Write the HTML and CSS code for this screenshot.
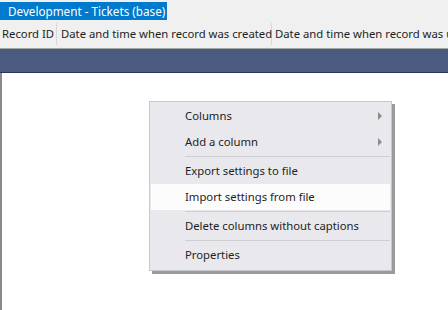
FILE: index.html
```html
<!DOCTYPE html>
<html lang="en">
<head>
    <meta charset="UTF-8">
    <title>Development - Tickets (base)</title>
    <link rel="stylesheet" href="styles.css">
</head>
<body>
    <div class="tab-strip">
        <div class="tab">Development - Tickets (base)</div>
    </div>
    <div class="grid-header">
        <div class="col col-id">Record ID</div>
        <div class="col col-created">Date and time when record was created</div>
        <div class="col col-updated">Date and time when record was updated</div>
    </div>
    <div class="group-bar"></div>
    <div class="grid-body"></div>

    <div class="context-menu">
        <div class="menu-item has-sub">Columns</div>
        <div class="menu-item has-sub">Add a column</div>
        <div class="menu-sep"></div>
        <div class="menu-item">Export settings to file</div>
        <div class="menu-item hover">Import settings from file</div>
        <div class="menu-sep"></div>
        <div class="menu-item">Delete columns without captions</div>
        <div class="menu-sep"></div>
        <div class="menu-item">Properties</div>
    </div>
</body>
</html>
```

FILE: styles.css
```css
body {
    margin: 0;
    padding: 0;
    width: 448px;
    height: 310px;
    overflow: hidden;
    position: relative;
    background-color: #fff;
    font-family: "Noto Sans", "Open Sans", Arial, sans-serif;
    font-size: 11.3px;
    color: #1e1e1e;
}
.tab-strip {
    height: 20px;
    padding-top: 2px;
    box-sizing: border-box;
    background-color: #f0f0f0;
    display: flex;
}
.tab {
    width: 167px;
    box-sizing: border-box;
    background-color: #007acc;
    color: #fff;
    padding-left: 8px;
    font-size: 11.7px;
    line-height: 18px;
    white-space: nowrap;
}
.grid-header {
    height: 28px;
    background-color: #f0f0f0;
    display: flex;
    white-space: nowrap;
    overflow: hidden;
}
.col {
    padding-left: 2px;
    border-right: 1px solid #d8d8d8;
    margin: 3px 0;
    line-height: 22px;
    box-sizing: border-box;
    flex-shrink: 0;
}
.col-id {
    width: 57px;
}
.col-created {
    width: 215px;
    padding-left: 4px;
}
.col-updated {
    padding-left: 3px;
    border-right: none;
}
.group-bar {
    height: 25px;
    background-color: #4b5b80;
    border-top: 1px solid #a8a8a8;
    border-bottom: 1px solid #27365a;
    box-sizing: border-box;
}
.grid-body {
    height: 237px;
    border-left: 2px solid #8a8a8a;
    background-color: #fff;
}
.context-menu {
    position: absolute;
    left: 149px;
    top: 101px;
    width: 243px;
    padding: 1px 1px 2px 1px;
    box-sizing: border-box;
    background-color: #e9e9ed;
    border: 1px solid #c8c8cc;
    box-shadow: 3px 3px 0 #9a9a9a;
}
.menu-item {
    height: 26px;
    line-height: 26px;
    padding-left: 34px;
    position: relative;
    white-space: nowrap;
}
.menu-item.hover {
    background-color: #fcfcfc;
}
.menu-item.has-sub::after {
    content: "";
    position: absolute;
    right: 8px;
    top: 9px;
    border-left: 4px solid #8c8c8c;
    border-top: 4px solid transparent;
    border-bottom: 4px solid transparent;
}
.menu-sep {
    height: 1px;
    margin: 1px 0 1px 34px;
    background-color: #cdcdd2;
}
```
